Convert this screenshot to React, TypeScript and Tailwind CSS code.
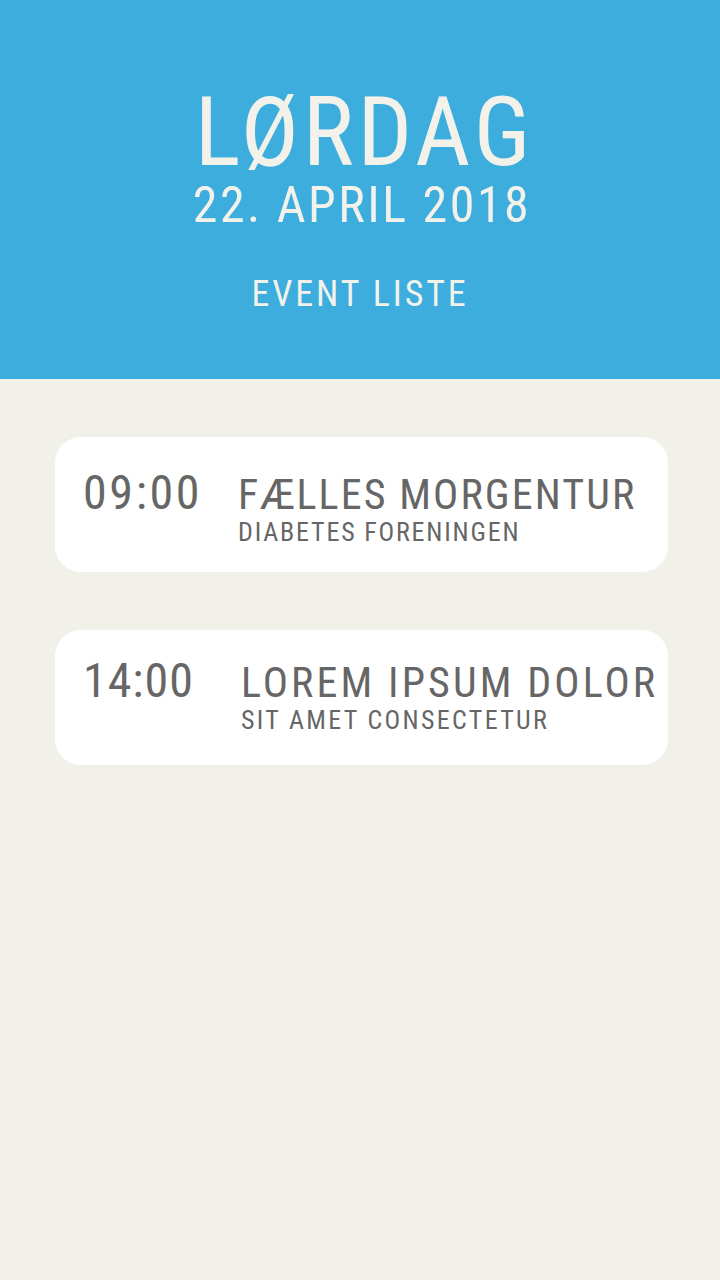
const events = [
  {
    time: "09:00",
    title: "FÆLLES MORGENTUR",
    host: "DIABETES FORENINGEN",
    pad: "pt-[32px]",
    timeCls: "w-[155px] tracking-[0.055em]",
    titleCls: "tracking-[0.05em]",
    hostCls: "tracking-[0.07em]",
  },
  {
    time: "14:00",
    title: "LOREM IPSUM DOLOR",
    host: "SIT AMET CONSECTETUR",
    pad: "pt-[27px]",
    timeCls: "w-[158px] tracking-[0.02em]",
    titleCls: "tracking-[0.074em]",
    hostCls: "tracking-[0.09em]",
  },
];

export default function App() {
  return (
    <div
      className="min-h-[1280px] w-[720px] bg-[#f2f1e9]"
      style={{ fontFamily: "'Roboto Condensed', Roboto, sans-serif" }}
    >
      {/* Header */}
      <header className="h-[379px] bg-[#3dadde] pt-[84px] flex flex-col items-center text-[#f3f2ea]">
        <h1 className="ml-[9px] text-[96px] leading-none tracking-[0.04em]">LØRDAG</h1>
        <p className="ml-[4px] text-[50px] leading-none tracking-[0.05em]">22. APRIL 2018</p>
        <p className="mt-[46px] text-[36px] leading-none tracking-[0.08em]">EVENT LISTE</p>
      </header>

      {/* Events */}
      <main className="pt-[58px] pl-[55px] flex flex-col gap-[58px]">
        {events.map((ev) => (
          <div
            key={ev.time}
            className={`w-[613px] h-[135px] bg-white rounded-[26px] pl-[28px] flex items-start text-[#666666] ${ev.pad}`}
          >
            <div className={`text-[48px] leading-none ${ev.timeCls}`}>{ev.time}</div>
            <div className="pt-[5px]">
              <div className={`text-[42px] leading-none whitespace-nowrap ${ev.titleCls}`}>{ev.title}</div>
              <div className={`mt-[3px] text-[26px] leading-none whitespace-nowrap ${ev.hostCls}`}>{ev.host}</div>
            </div>
          </div>
        ))}
      </main>
    </div>
  );
}
